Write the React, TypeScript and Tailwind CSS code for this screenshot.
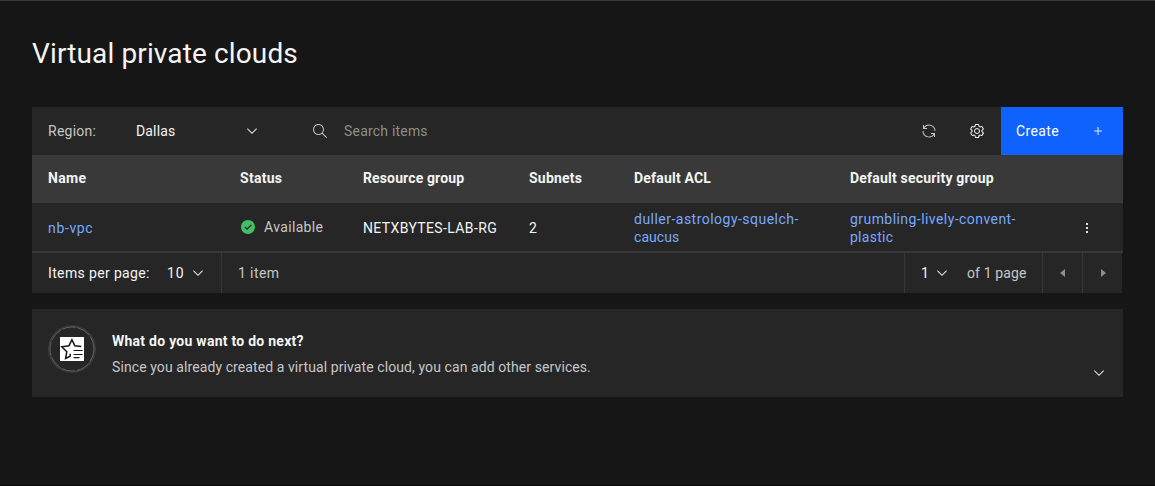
import React, { type ReactNode } from 'react';

type IconProps = { className?: string };

function Icon({ className = '', viewBox = '0 0 16 16', children }: IconProps & { viewBox?: string; children: ReactNode }) {
  return (
    <svg className={`h-4 w-4 shrink-0 ${className}`} viewBox={viewBox} fill="currentColor" aria-hidden="true">
      {children}
    </svg>
  );
}

const ChevronDown = ({ className }: IconProps) => (
  <Icon className={className}>
    <path d="M8 11L3 6 3.7 5.3 8 9.6 12.3 5.3 13 6z" />
  </Icon>
);

const Search = ({ className }: IconProps) => (
  <Icon className={className}>
    <path
      fillRule="evenodd"
      d="M15,14.3L10.7,10c1.9-2.3,1.6-5.8-0.7-7.7S4.2,0.7,2.3,3S0.7,8.8,3,10.7c2,1.7,5,1.7,7,0l4.3,4.3L15,14.3z M2,6.5C2,4,4,2,6.5,2S11,4,11,6.5S9,11,6.5,11S2,9,2,6.5z"
    />
  </Icon>
);

const Renew = ({ className }: IconProps) => (
  <Icon className={className} viewBox="0 0 32 32">
    <path d="M12,10H6.78A11,11,0,0,1,27,16h2A13,13,0,0,0,6,7.68V4H4v8h8Z" />
    <path d="M20,22h5.22A11,11,0,0,1,5,16H3a13,13,0,0,0,23,8.32V28h2V20H20Z" />
  </Icon>
);

const Settings = ({ className }: IconProps) => (
  <Icon className={className}>
    <path
      fillRule="evenodd"
      d="M13.5,8.4c0-0.1,0-0.3,0-0.4c0-0.1,0-0.3,0-0.4l1-0.8c0.4-0.3,0.4-0.9,0.2-1.3l-1.2-2C13.3,3.2,13,3,12.6,3c-0.1,0-0.2,0-0.3,0.1l-1.2,0.4c-0.2-0.1-0.4-0.3-0.7-0.4l-0.3-1.3C10.1,1.3,9.7,1,9.2,1H6.8c-0.5,0-0.9,0.3-1,0.8L5.6,3.1C5.3,3.2,5.1,3.3,4.9,3.4L3.7,3C3.6,3,3.5,3,3.4,3C3,3,2.7,3.2,2.5,3.5l-1.2,2C1.1,5.9,1.2,6.4,1.6,6.8l0.9,0.9c0,0.1,0,0.3,0,0.4c0,0.1,0,0.3,0,0.4L1.6,9.2c-0.4,0.3-0.5,0.9-0.2,1.3l1.2,2C2.7,12.8,3,13,3.4,13c0.1,0,0.2,0,0.3-0.1l1.2-0.4c0.2,0.1,0.4,0.3,0.7,0.4l0.3,1.3c0.1,0.5,0.5,0.8,1,0.8h2.4c0.5,0,0.9-0.3,1-0.8l0.3-1.3c0.2-0.1,0.4-0.2,0.7-0.4l1.2,0.4c0.1,0,0.2,0.1,0.3,0.1c0.4,0,0.7-0.2,0.9-0.5l1.1-2c0.2-0.4,0.2-0.9-0.2-1.3L13.5,8.4z M12.6,12l-1.7-0.6c-0.4,0.3-0.9,0.6-1.4,0.8L9.2,14H6.8l-0.4-1.8c-0.5-0.2-0.9-0.5-1.4-0.8L3.4,12l-1.2-2l1.4-1.2c-0.1-0.5-0.1-1.1,0-1.6L2.2,6l1.2-2l1.7,0.6C5.5,4.2,6,4,6.5,3.8L6.8,2h2.4l0.4,1.8c0.5,0.2,0.9,0.5,1.4,0.8L12.6,4l1.2,2l-1.4,1.2c0.1,0.5,0.1,1.1,0,1.6l1.4,1.2L12.6,12z"
    />
    <circle cx="8" cy="8" r="2.5" fill="none" stroke="currentColor" />
  </Icon>
);

const CheckmarkFilled = ({ className }: IconProps) => (
  <Icon className={className}>
    <path
      fillRule="evenodd"
      d="M8,1C4.1,1,1,4.1,1,8c0,3.9,3.1,7,7,7s7-3.1,7-7C15,4.1,11.9,1,8,1z M7,11L4.3,8.3l0.9-0.8L7,9.3l4-3.9l0.9,0.8L7,11z"
    />
  </Icon>
);

const Overflow = ({ className }: IconProps) => (
  <Icon className={className}>
    <path d="M7 3h2v2H7zM7 7h2v2H7zM7 11h2v2H7z" />
  </Icon>
);

function FavoriteListBadge() {
  return (
    <svg className="h-12 w-12 shrink-0" viewBox="0 0 48 48" fill="none" aria-hidden="true">
      <circle cx="24" cy="24" r="23" stroke="#393939" strokeWidth="2" />
      <circle cx="24" cy="24" r="22" stroke="#616161" strokeWidth="1" strokeDasharray="14 1.5" />
      <rect x="12" y="12" width="24" height="24" fill="#ffffff" />
      <path
        d="M33.3 21.6l-6.5-.9-2.9-6-2.9 6-7.2 1.1 5 4.9-1.2 6.8 4.6-2.3v-2.4"
        stroke="#161616"
        strokeWidth="1.5"
      />
      <path d="M25.5 25.5h9M25.5 29.5h9M25.5 32.7h6" stroke="#161616" strokeWidth="1.2" />
    </svg>
  );
}

function Toolbar() {
  return (
    <div className="flex h-12 items-center bg-[#262626]">
      <span className="w-[104px] pl-4 tracking-[0.26px] text-[#c6c6c6]">Region:</span>
      <button className="flex w-[124px] items-center justify-between text-left text-[#f4f4f4]">
        <span className="tracking-[0.15px]">Dallas</span>
        <ChevronDown className="text-[#e0e0e0]" />
      </button>
      <div className="ml-[52px] flex flex-1 items-center gap-4">
        <Search className="text-[#c6c6c6]" />
        <span className="tracking-[0.2px] text-[#8d8d8d]">Search items</span>
      </div>
      <button className="flex h-12 w-12 items-center justify-center">
        <Renew className="text-[#c6c6c6]" />
      </button>
      <button className="flex h-12 w-12 items-center justify-center">
        <Settings className="text-[#f4f4f4]" />
      </button>
      <button className="flex h-12 w-[122px] items-center justify-between bg-[#0f62fe] pl-[15px] pr-[17px] text-white">
        <span className="tracking-[0.4px]">Create</span>
        <Icon className="text-[#d6e4ff]">
          <path d="M7.45 4h1.1v3.45H12v1.1H8.55V12h-1.1V8.55H4v-1.1h3.45z" />
        </Icon>
      </button>
    </div>
  );
}

const GRID = 'grid grid-cols-[192px_123px_166px_105px_216px_200px_1fr] pl-4';

function VpcTable() {
  return (
    <>
      <div className={`${GRID} h-12 items-center bg-[#393939] pb-0.5 font-bold text-[#f4f4f4]`}>
        <span className="tracking-[0.3px]">Name</span>
        <span className="tracking-[0.28px]">Status</span>
        <span className="tracking-[0.13px]">Resource group</span>
        <span className="tracking-[0.22px]">Subnets</span>
        <span className="tracking-[0.2px]">Default ACL</span>
        <span className="tracking-[0.2px]">Default security group</span>
      </div>
      <div className={`${GRID} h-[50px] items-center border-b-2 border-[#393939] bg-[#262626] text-[#f4f4f4]`}>
        <a className="pt-0.5 tracking-[0.65px] text-[#78a9ff]">nb-vpc</a>
        <span className="flex items-center gap-2 text-[#c6c6c6]">
          <CheckmarkFilled className="text-[#42be65]" />
          <span className="tracking-[0.35px]">Available</span>
        </span>
        <span className="pt-0.5 tracking-[0.37px]">NETXBYTES-LAB-RG</span>
        <span className="pt-0.5">2</span>
        <a className="pt-0.5 leading-[18px] text-[#78a9ff]">
          <span className="block tracking-[0.48px]">duller-astrology-squelch-</span>
          <span className="block tracking-[0.05px]">caucus</span>
        </a>
        <a className="pt-0.5 leading-[18px] text-[#78a9ff]">
          <span className="block tracking-[0.44px]">grumbling-lively-convent-</span>
          <span className="block tracking-[0.26px]">plastic</span>
        </a>
        <button className="ml-[29px] pt-0.5">
          <Overflow className="text-[#e0e0e0]" />
        </button>
      </div>
    </>
  );
}

function Pagination() {
  return (
    <div className="mr-px flex h-10 items-center bg-[#262626] text-[#c6c6c6]">
      <div className="flex h-10 w-[190px] items-center border-r border-[#393939] pl-4 text-[#f4f4f4]">
        <span className="w-[119px] tracking-[0.36px]">Items per page:</span>
        <span className="w-[23px] tracking-[0.8px]">10</span>
        <ChevronDown className="text-[#e0e0e0]" />
      </div>
      <span className="flex-1 pl-4 tracking-[0.39px]">1 item</span>
      <div className="flex h-10 w-[139px] items-center border-x border-[#393939] pl-4">
        <span className="w-[13px] text-[#f4f4f4]">1</span>
        <ChevronDown className="text-[#e0e0e0]" />
        <span className="ml-[17px] whitespace-nowrap tracking-[0.13px]">of 1 page</span>
      </div>
      <button className="flex h-10 w-10 items-center border-r border-[#393939] pl-3">
        <Icon className="text-[#8d8d8d]">
          <path d="M10 12L5 8l5-4z" />
        </Icon>
      </button>
      <button className="flex h-10 w-[39px] items-center pl-3">
        <Icon className="text-[#8d8d8d]">
          <path d="M6 4l5 4-5 4z" />
        </Icon>
      </button>
    </div>
  );
}

function NextSteps() {
  return (
    <section className="mt-4 flex h-[88px] bg-[#262626] pl-4 pr-4 pt-4">
      <FavoriteListBadge />
      <div className="ml-4 flex-1 pt-1.5">
        <h2 className="font-bold leading-5 tracking-[0.26px] text-[#f4f4f4]">What do you want to do next?</h2>
        <p className="mt-1.5 leading-5 tracking-[0.09px] text-[#c6c6c6]">
          Since you already created a virtual private cloud, you can add other services.
        </p>
      </div>
      <ChevronDown className="mt-10 text-[#e0e0e0]" />
    </section>
  );
}

export default function App() {
  return (
    <main className="h-[486px] overflow-hidden border-b border-t border-b-[#0b0b0b] border-t-[#393939] bg-[#161616] pl-8 pr-8 font-['Roboto',sans-serif] text-sm leading-[18px]">
      <h1 className="mb-[35px] pt-[35px] text-[28px] leading-9 tracking-[0.13px] text-[#f4f4f4]">Virtual private clouds</h1>
      <Toolbar />
      <VpcTable />
      <Pagination />
      <NextSteps />
    </main>
  );
}
